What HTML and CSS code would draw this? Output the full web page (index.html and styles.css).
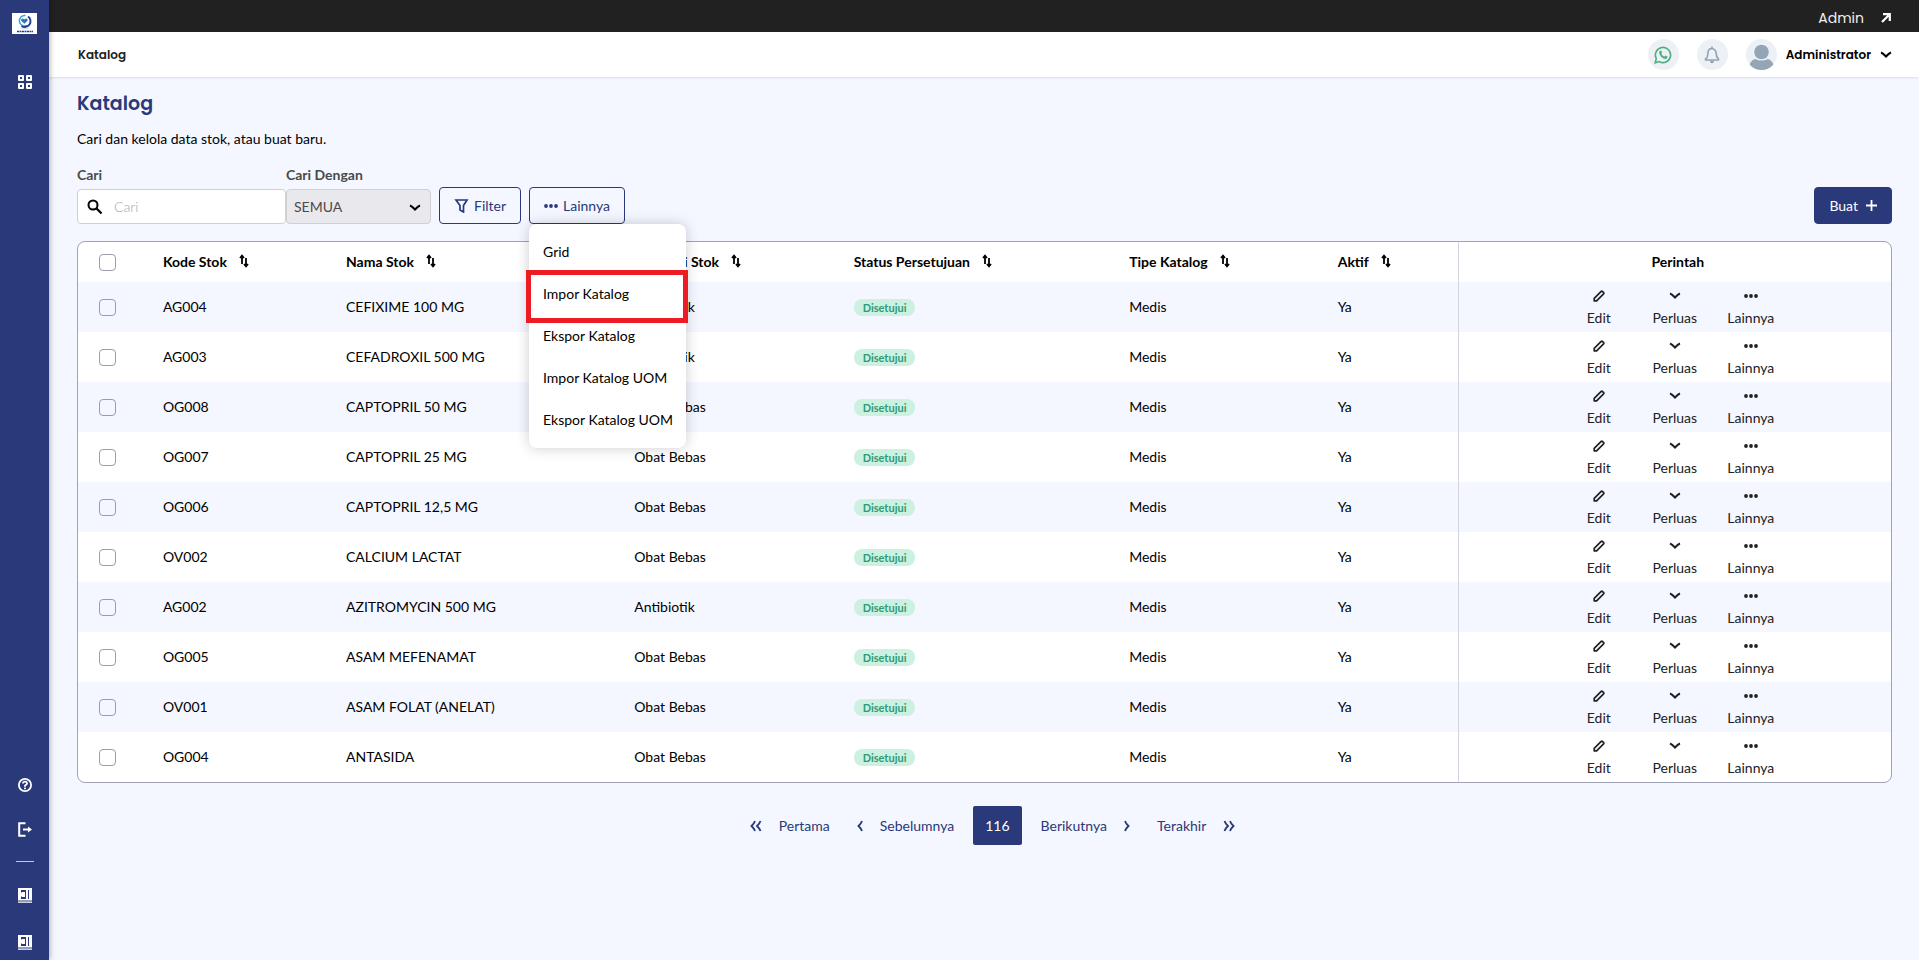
FILE: index.html
```html
<!DOCTYPE html>
<html lang="id">
<head>
  <meta charset="UTF-8" />
  <meta name="viewport" content="width=device-width, initial-scale=1" />
  <title>Katalog</title>
  <link rel="stylesheet" href="styles.css">
</head>
<body>
  <!-- shared icons -->
  <svg class="sprite" aria-hidden="true">
    <symbol id="i-sort" viewBox="0 0 10 14"><path d="M3 10V2M1 4l2-2.4L5 4M7 4v8M5 10l2 2.4L9 10" fill="none" stroke="currentColor" stroke-width="1.8"/></symbol>
    <symbol id="i-edit" viewBox="0 0 12 12"><path d="M1.200 10.800V8.400L8.200 1.400q.6-.5 1.200 0l1.200 1.200q.5.600 0 1.200L3.600 10.800z" fill="none" stroke="currentColor" stroke-width="1.700" stroke-linejoin="round"/></symbol>
    <symbol id="i-down" viewBox="0 0 12 12"><path d="M1 3.500Q3 4.200 6 7.500 9 4.200 11 3.500" fill="none" stroke="currentColor" stroke-width="2"/></symbol>
    <symbol id="i-dots" viewBox="0 0 14 12"><g fill="currentColor"><circle cx="2" cy="6" r="1.900"/><circle cx="7" cy="6" r="1.900"/><circle cx="12" cy="6" r="1.900"/></g></symbol>
    <symbol id="i-left" viewBox="0 0 6 12"><path d="M5 1Q4.200 3.500 1.500 6 4.200 8.500 5 11" fill="none" stroke="currentColor" stroke-width="1.800"/></symbol>
    <symbol id="i-first" viewBox="0 0 12 12"><path d="M5 1Q4.200 3.500 1.500 6 4.200 8.500 5 11M10.500 1Q9.700 3.500 7 6 9.700 8.500 10.500 11" fill="none" stroke="currentColor" stroke-width="1.800"/></symbol>
    <symbol id="i-panel" viewBox="0 0 14 15"><path fill="currentColor" fill-rule="evenodd" d="M0 0h14v12.500H0zM3 2v2.500h1V4h3v5H4v-.5H3V11h5V2zM10 2v9h1V2zM0 13.500h14v1.200H0z"/><path fill="currentColor" d="M2 5.800h2V4.200l3 2.300-3 2.300V7.200H2z"/></symbol>
  </svg>

  <aside class="sidebar">
    <a href="#" class="logo" aria-label="Medical Care">
      <svg width="25" height="21" viewBox="0 0 25 21"><path fill="#fff" d="M0 0h25v21H0z"/><path d="M13.500 2.500a5.300 5.300 0 1 0 1.500 10" fill="none" stroke="#35a5dd" stroke-width="1.500"/><path d="M16 3.500a5.300 5.300 0 0 1-6.500 9.500" fill="none" stroke="#223c92" stroke-width="1.900"/><path fill="#2877bd" d="M12.400 10.800L9 7.600q0-2.200 1.800-2.100l1.500 1 1.500-1q1.900-.1 1.900 2.100z"/><path d="M5 18.500h16" stroke="#223c92" stroke-width="1.300" stroke-dasharray="2 .5"/><path d="M9 15.800h8" stroke="#b7d9ef" stroke-width=".7"/></svg>
    </a>
    <a href="#" class="side-link" aria-label="Dashboard">
      <svg width="14" height="14" viewBox="0 0 14 14" fill="none" stroke="#fff" stroke-width="2"><path d="M1 1h4v4H1zM9 1h4v4H9zM1 9h4v4H1zM9 9h4v4H9z" stroke-linejoin="round"/></svg>
    </a>
    <nav class="side-bottom">
      <a href="#" class="side-link" aria-label="Bantuan">
        <svg width="14" height="14" viewBox="0 0 14 14" fill="none" stroke="#fff" stroke-width="1.800"><circle cx="7" cy="7" r="6.100"/><path d="M4.900 5.500q.2-1.900 2.100-1.900t2.100 1.700Q9.100 6.500 7 7.500v1.200M7 9.600v1.600"/></svg>
      </a>
      <a href="#" class="side-link" aria-label="Keluar">
        <svg width="14" height="15" viewBox="0 0 14 15"><path d="M7.500 1.200H1.200v12.600h6.300M5 7.500h6" fill="none" stroke="#fff" stroke-width="2"/><path d="M10 4.500l4 3-4 3z" fill="#fff"/></svg>
      </a>
      <hr>
      <div class="side-toggles">
        <a href="#" class="side-link" aria-label="Buka panel"><svg width="14" height="15"><use href="#i-panel"/></svg></a>
        <a href="#" class="side-link" aria-label="Buka menu"><svg width="14" height="15"><use href="#i-panel"/></svg></a>
      </div>
    </nav>
  </aside>

  <div class="page">
    <div class="topbar">
      <a href="#">Admin
        <svg width="10" height="10" viewBox="0 0 10 10"><path d="M1 9l6.500-6.500M2 1.200h6.800V8" fill="none" stroke="#fff" stroke-width="2.200"/></svg>
      </a>
    </div>
    <header class="header">
      <span class="crumb">Katalog</span>
      <div class="header-right">
        <a href="#" class="circle" aria-label="WhatsApp">
          <svg width="18" height="18" viewBox="0 0 18 18"><path d="M1.200 16.800l1.100-4.200a7.600 7.600 0 1 1 2.900 3z" fill="none" stroke="#4caf7d" stroke-width="1.600"/><path fill="#4caf7d" d="M5.500 5.300q.9-1.300 1.700-.6l.8 1.900q.1.400-.7 1.200 1 2 3 2.900l1-1.100 2.100 1q.4.500-.4 1.600-1.300 1.200-3.400.3Q6.400 10.800 5.400 8q-.5-1.500.1-2.700z"/></svg>
        </a>
        <a href="#" class="circle" aria-label="Notifikasi">
          <svg width="16" height="18" viewBox="0 0 16 18"><path d="M8 2.500Q4 2.500 3.800 7.500T1.700 12.500q-.7 1.500.5 1.500h11.600q1.200 0 .5-1.500-1.900-.8-2.100-5T8 2.500zM8 .5v2" fill="none" stroke="#8fa3b5" stroke-width="1.600"/><path d="M6 15h4q0 2.200-2 2.200T6 15z" fill="#8fa3b5"/></svg>
        </a>
        <button type="button" class="user">
          <svg class="avatar" width="31" height="31" viewBox="0 0 31 31"><clipPath id="av"><circle cx="15.500" cy="15.500" r="15.500"/></clipPath><g clip-path="url(#av)"><path fill="#edf0f5" d="M0 0h31v31H0z"/><circle cx="15.500" cy="13" r="7.300" fill="#94a5b6"/><path fill="#94a5b6" d="M3 27q2-6 6-7 6.500 3 13 0 4 1 6 7v4H3z"/></g></svg>
          Administrator
          <svg width="12" height="12"><use href="#i-down"/></svg>
        </button>
      </div>
    </header>

    <main class="content">
      <h1>Katalog</h1>
      <p class="intro">Cari dan kelola data stok, atau buat baru.</p>

      <form class="toolbar">
        <div class="field search">
          <label for="cari">Cari</label>
          <div class="control">
            <svg class="search-icon" width="16" height="16" viewBox="0 0 16 16"><circle cx="6" cy="6" r="4.500" fill="none" stroke="#000" stroke-width="2"/><path d="M9.300 9.300l5.200 5.200" stroke="#000" stroke-width="2.200"/></svg>
            <input type="text" id="cari" placeholder="Cari">
          </div>
        </div>
        <div class="field by">
          <label for="cariDengan">Cari Dengan</label>
          <div class="control">
            <select id="cariDengan"><option>SEMUA</option></select>
            <svg class="select-icon" width="12" height="12"><use href="#i-down"/></svg>
          </div>
        </div>
        <button type="button" class="btn btn-outline">
          <svg width="15" height="14" viewBox="0 0 15 14"><path d="M2 1h11L9.500 6.500V13L6 11V6.500z" fill="none" stroke="currentColor" stroke-width="1.700"/></svg>Filter
        </button>
        <div class="more">
          <button type="button" class="btn btn-outline"><svg width="14" height="12"><use href="#i-dots"/></svg>Lainnya</button>
          <div class="menu">
            <a href="#">Grid</a>
            <a href="#" class="marked">Impor Katalog</a>
            <a href="#">Ekspor Katalog</a>
            <a href="#">Impor Katalog UOM</a>
            <a href="#">Ekspor Katalog UOM</a>
          </div>
        </div>
        <button type="button" class="btn btn-primary">Buat
          <svg width="11" height="12" viewBox="0 0 11 12"><path d="M5.500 0v11M0 5.500h11" stroke="#fff" stroke-width="1.800"/></svg>
        </button>
      </form>

      <div class="table-box">
        <table>
          <colgroup>
            <col class="c-check"><col class="c-code"><col class="c-name"><col class="c-cat"><col class="c-status"><col class="c-type"><col class="c-active"><col>
          </colgroup>
          <thead>
            <tr>
              <th><input type="checkbox" aria-label="Pilih semua"></th>
              <th>Kode Stok <svg width="10" height="14"><use href="#i-sort"/></svg></th>
              <th>Nama Stok <svg width="10" height="14"><use href="#i-sort"/></svg></th>
              <th>Kategori Stok <svg width="10" height="14"><use href="#i-sort"/></svg></th>
              <th>Status Persetujuan <svg width="10" height="14"><use href="#i-sort"/></svg></th>
              <th>Tipe Katalog <svg width="10" height="14"><use href="#i-sort"/></svg></th>
              <th>Aktif <svg width="10" height="14"><use href="#i-sort"/></svg></th>
              <th>Perintah</th>
            </tr>
          </thead>
          <tbody>
            <tr>
              <td><input type="checkbox" aria-label="AG004"></td><td>AG004</td><td>CEFIXIME 100 MG</td><td>Antibiotik</td><td><span class="badge">Disetujui</span></td><td>Medis</td><td>Ya</td>
              <td><div class="actions"><button type="button"><svg width="12" height="12"><use href="#i-edit"/></svg>Edit</button><button type="button"><svg width="12" height="12"><use href="#i-down"/></svg>Perluas</button><button type="button"><svg width="14" height="12"><use href="#i-dots"/></svg>Lainnya</button></div></td>
            </tr>
            <tr>
              <td><input type="checkbox" aria-label="AG003"></td><td>AG003</td><td>CEFADROXIL 500 MG</td><td>Antibiotik</td><td><span class="badge">Disetujui</span></td><td>Medis</td><td>Ya</td>
              <td><div class="actions"><button type="button"><svg width="12" height="12"><use href="#i-edit"/></svg>Edit</button><button type="button"><svg width="12" height="12"><use href="#i-down"/></svg>Perluas</button><button type="button"><svg width="14" height="12"><use href="#i-dots"/></svg>Lainnya</button></div></td>
            </tr>
            <tr>
              <td><input type="checkbox" aria-label="OG008"></td><td>OG008</td><td>CAPTOPRIL 50 MG</td><td>Obat Bebas</td><td><span class="badge">Disetujui</span></td><td>Medis</td><td>Ya</td>
              <td><div class="actions"><button type="button"><svg width="12" height="12"><use href="#i-edit"/></svg>Edit</button><button type="button"><svg width="12" height="12"><use href="#i-down"/></svg>Perluas</button><button type="button"><svg width="14" height="12"><use href="#i-dots"/></svg>Lainnya</button></div></td>
            </tr>
            <tr>
              <td><input type="checkbox" aria-label="OG007"></td><td>OG007</td><td>CAPTOPRIL 25 MG</td><td>Obat Bebas</td><td><span class="badge">Disetujui</span></td><td>Medis</td><td>Ya</td>
              <td><div class="actions"><button type="button"><svg width="12" height="12"><use href="#i-edit"/></svg>Edit</button><button type="button"><svg width="12" height="12"><use href="#i-down"/></svg>Perluas</button><button type="button"><svg width="14" height="12"><use href="#i-dots"/></svg>Lainnya</button></div></td>
            </tr>
            <tr>
              <td><input type="checkbox" aria-label="OG006"></td><td>OG006</td><td>CAPTOPRIL 12,5 MG</td><td>Obat Bebas</td><td><span class="badge">Disetujui</span></td><td>Medis</td><td>Ya</td>
              <td><div class="actions"><button type="button"><svg width="12" height="12"><use href="#i-edit"/></svg>Edit</button><button type="button"><svg width="12" height="12"><use href="#i-down"/></svg>Perluas</button><button type="button"><svg width="14" height="12"><use href="#i-dots"/></svg>Lainnya</button></div></td>
            </tr>
            <tr>
              <td><input type="checkbox" aria-label="OV002"></td><td>OV002</td><td>CALCIUM LACTAT</td><td>Obat Bebas</td><td><span class="badge">Disetujui</span></td><td>Medis</td><td>Ya</td>
              <td><div class="actions"><button type="button"><svg width="12" height="12"><use href="#i-edit"/></svg>Edit</button><button type="button"><svg width="12" height="12"><use href="#i-down"/></svg>Perluas</button><button type="button"><svg width="14" height="12"><use href="#i-dots"/></svg>Lainnya</button></div></td>
            </tr>
            <tr>
              <td><input type="checkbox" aria-label="AG002"></td><td>AG002</td><td>AZITROMYCIN 500 MG</td><td>Antibiotik</td><td><span class="badge">Disetujui</span></td><td>Medis</td><td>Ya</td>
              <td><div class="actions"><button type="button"><svg width="12" height="12"><use href="#i-edit"/></svg>Edit</button><button type="button"><svg width="12" height="12"><use href="#i-down"/></svg>Perluas</button><button type="button"><svg width="14" height="12"><use href="#i-dots"/></svg>Lainnya</button></div></td>
            </tr>
            <tr>
              <td><input type="checkbox" aria-label="OG005"></td><td>OG005</td><td>ASAM MEFENAMAT</td><td>Obat Bebas</td><td><span class="badge">Disetujui</span></td><td>Medis</td><td>Ya</td>
              <td><div class="actions"><button type="button"><svg width="12" height="12"><use href="#i-edit"/></svg>Edit</button><button type="button"><svg width="12" height="12"><use href="#i-down"/></svg>Perluas</button><button type="button"><svg width="14" height="12"><use href="#i-dots"/></svg>Lainnya</button></div></td>
            </tr>
            <tr>
              <td><input type="checkbox" aria-label="OV001"></td><td>OV001</td><td>ASAM FOLAT (ANELAT)</td><td>Obat Bebas</td><td><span class="badge">Disetujui</span></td><td>Medis</td><td>Ya</td>
              <td><div class="actions"><button type="button"><svg width="12" height="12"><use href="#i-edit"/></svg>Edit</button><button type="button"><svg width="12" height="12"><use href="#i-down"/></svg>Perluas</button><button type="button"><svg width="14" height="12"><use href="#i-dots"/></svg>Lainnya</button></div></td>
            </tr>
            <tr>
              <td><input type="checkbox" aria-label="OG004"></td><td>OG004</td><td>ANTASIDA</td><td>Obat Bebas</td><td><span class="badge">Disetujui</span></td><td>Medis</td><td>Ya</td>
              <td><div class="actions"><button type="button"><svg width="12" height="12"><use href="#i-edit"/></svg>Edit</button><button type="button"><svg width="12" height="12"><use href="#i-down"/></svg>Perluas</button><button type="button"><svg width="14" height="12"><use href="#i-dots"/></svg>Lainnya</button></div></td>
            </tr>
          </tbody>
        </table>
      </div>

      <nav class="pager">
        <a href="#"><svg width="12" height="12"><use href="#i-first"/></svg>Pertama</a>
        <a href="#"><svg width="6" height="12"><use href="#i-left"/></svg>Sebelumnya</a>
        <a href="#" class="current">116</a>
        <a href="#">Berikutnya<svg class="flip" width="6" height="12"><use href="#i-left"/></svg></a>
        <a href="#">Terakhir<svg class="flip" width="12" height="12"><use href="#i-first"/></svg></a>
      </nav>
    </main>
  </div>
</body>
</html>
```
FILE: styles.css
```css
* {
  box-sizing: border-box;
}
body {
  margin: 0;
  min-height: 100vh;
  display: flex;
  background: #f4f7ff;
  color: #000;
  font-family: Lato, sans-serif;
  font-size: 14px;
  line-height: 20px;
}
a {
  color: inherit;
  text-decoration: none;
}
button, input, select {
  font: inherit;
  color: inherit;
}
button {
  cursor: pointer;
}
svg {
  flex: none;
}
.sprite {
  position: absolute;
  width: 0;
  height: 0;
}

/* sidebar */
.sidebar {
  width: 49px;
  flex: none;
  padding: 13px 0 3px;
  display: flex;
  flex-direction: column;
  align-items: center;
  background: #293979;
  color: #fff;
  box-shadow: 1px 0 5px rgba(0,0,0,0.3);
  z-index: 2;
}
.logo {
  height: 21px;
  margin-bottom: 33px;
}
.logo svg {
  display: block;
}
.side-link {
  width: 30px;
  height: 30px;
  display: flex;
  align-items: center;
  justify-content: center;
}
.side-bottom {
  margin-top: auto;
  display: flex;
  flex-direction: column;
  align-items: center;
  gap: 14px;
}
.side-bottom hr {
  width: 18px;
  height: 1px;
  margin: 3px 0 4px;
  border: none;
  background: #c3c9dc;
}
.side-toggles {
  display: flex;
  flex-direction: column;
  gap: 17px;
}

/* top */
.page {
  flex: 1;
  min-width: 0;
}
.topbar {
  height: 32px;
  padding: 4px 28px 0;
  display: flex;
  align-items: center;
  justify-content: flex-end;
  background: #212121;
  color: #eee;
  font-family: Poppins, Inter, sans-serif;
}
.topbar a {
  display: flex;
  align-items: center;
  gap: 17px;
}
.header {
  height: 45px;
  padding: 0 27px 0 29px;
  display: flex;
  align-items: center;
  justify-content: space-between;
  background: #fff;
  box-shadow: 0 1px 2px rgba(0,0,0,0.1);
  font-family: Poppins, Inter, sans-serif;
  font-size: 12px;
  font-weight: 600;
}
.crumb {
  color: #212121;
}
.header-right {
  display: flex;
  align-items: center;
  gap: 18px;
}
.circle {
  width: 31px;
  height: 31px;
  border-radius: 50%;
  display: flex;
  align-items: center;
  justify-content: center;
  background: #edf0f5;
}
.user {
  display: flex;
  align-items: center;
  gap: 9px;
  padding: 0;
  border: none;
  background: none;
}

/* content */
.content {
  padding: 15px 27px 24px 28px;
}
h1 {
  margin: 0;
  font-family: Poppins, Inter, sans-serif;
  font-size: 19px;
  line-height: 24px;
  font-weight: 600;
  color: #293979;
}
.intro {
  margin: 13px 0 16px;
}
.toolbar {
  display: flex;
  align-items: flex-end;
  margin-bottom: 17px;
}
.field {
  display: flex;
  flex-direction: column;
  gap: 4px;
}
.field label {
  font-weight: 700;
  color: #4a4a4a;
}
.search {
  width: 209px;
}
.by {
  width: 145px;
  margin-right: 8px;
}
.control {
  position: relative;
}
.control input, .control select {
  display: block;
  width: 100%;
  height: 35px;
  border: 1px solid #d0d0d4;
  border-radius: 4px;
  background: #fff;
  outline: none;
}
.control input {
  padding: 0 8px 0 36px;
}
.control input::placeholder {
  color: #9aa7b8;
  font-weight: 300;
}
.control select {
  appearance: none;
  padding: 0 7px;
  background: #e9e9ed;
  color: #4a4a4a;
}
.search-icon {
  position: absolute;
  left: 10px;
  top: 10px;
}
.select-icon {
  position: absolute;
  right: 10px;
  top: 13px;
}
.btn {
  height: 37px;
  padding: 0 14px;
  display: flex;
  align-items: center;
  gap: 5px;
  border: 1px solid #293979;
  border-radius: 4px;
}
.btn-outline {
  margin-right: 8px;
  background: transparent;
  color: #293979;
}
.btn-primary {
  margin-left: auto;
  gap: 8px;
  background: #293979;
  color: #fff;
}
.more {
  position: relative;
}
.menu {
  position: absolute;
  top: 100%;
  left: 0;
  z-index: 5;
  padding: 7px 0;
  border-radius: 8px;
  background: #fff;
  box-shadow: 0 0 14px rgba(0,0,0,0.2);
  white-space: nowrap;
}
.menu a {
  display: block;
  padding: 11px 13px 11px 14px;
}
.marked {
  position: relative;
}
.marked::after {
  content: "";
  position: absolute;
  inset: -3px -2px -8px -3px;
  border: 5px solid #ed1c24;
}

/* table */
.table-box {
  border: 1px solid #a0a3b5;
  border-radius: 8px;
  overflow: hidden;
  background: #fff;
}
table {
  width: 100%;
  table-layout: fixed;
  border-collapse: separate;
  border-spacing: 0;
}
.c-check { width: 3.8%; }
.c-code { width: 10.1%; }
.c-name { width: 15.9%; }
.c-cat { width: 12.1%; }
.c-status { width: 15.2%; }
.c-type { width: 11.5%; }
.c-active { width: 7.5%; }
th, td {
  padding: 0 16px;
  text-align: left;
  white-space: nowrap;
}
th {
  height: 40px;
  font-weight: 700;
}
th svg {
  margin-left: 9px;
  vertical-align: -1px;
}
td {
  height: 50px;
}
tbody tr:nth-child(odd) {
  background: #f4f7ff;
}
th:first-child, td:first-child {
  padding: 0 0 0 21px;
}
th:last-child, td:last-child {
  border-left: 1px solid #d3d4de;
  text-align: center;
}
th:last-child {
  padding: 0 16px 0 22px;
}
input[type="checkbox"] {
  appearance: none;
  display: block;
  width: 17px;
  height: 17px;
  margin: 0;
  border: 1px solid #9a9caf;
  border-radius: 4px;
}
.badge {
  display: inline-block;
  padding: 0 9px;
  border-radius: 8px;
  background: #ccf1e1;
  color: #2f9b78;
  font-size: 11px;
  line-height: 17px;
  font-weight: 700;
}
.actions {
  display: flex;
  justify-content: center;
}
.actions button {
  width: 76px;
  padding: 3px 0 0;
  display: flex;
  flex-direction: column;
  align-items: center;
  gap: 6px;
  border: none;
  background: none;
  color: #212121;
}

/* pagination */
.pager {
  margin-top: 23px;
  padding-left: 16px;
  display: flex;
  align-items: center;
  justify-content: center;
  gap: 27px;
  color: #293979;
}
.pager a {
  display: flex;
  align-items: center;
  gap: 17px;
}
.pager .current {
  height: 39px;
  margin: 0 -8px;
  padding: 0 12px;
  border-radius: 2px;
  background: #293979;
  color: #fff;
}
.flip {
  transform: scaleX(-1);
}
```
